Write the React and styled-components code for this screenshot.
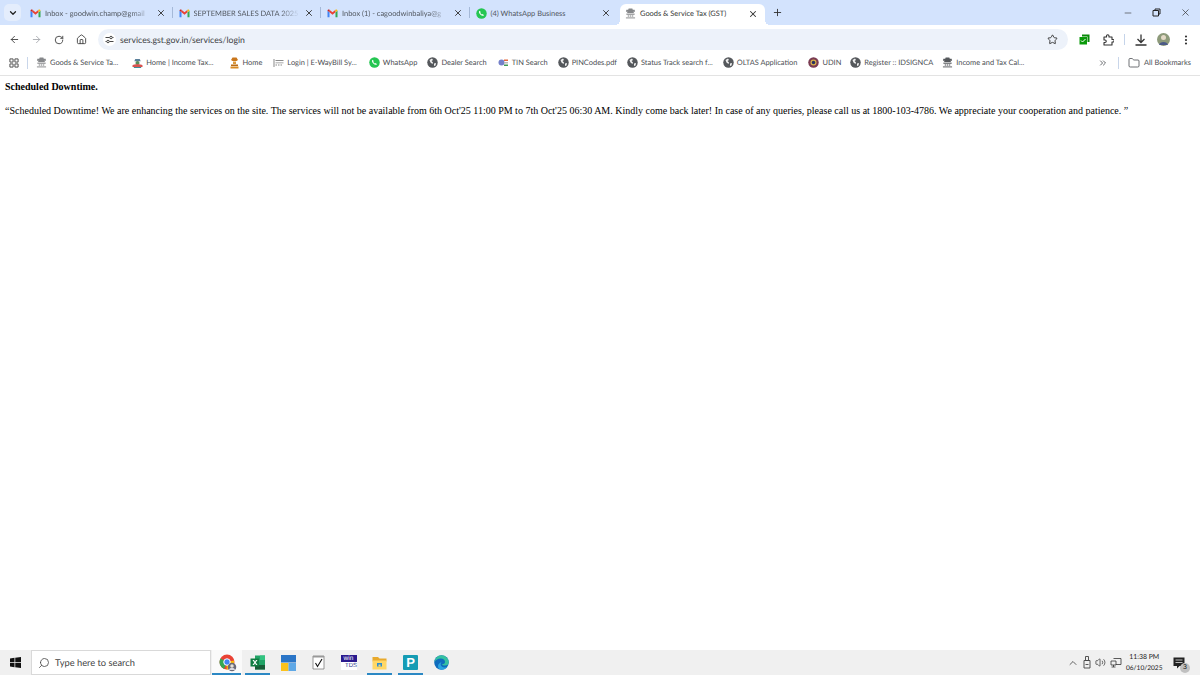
import { createGlobalStyle, css, styled } from "styled-components";
import {
  ArrowLeft,
  ArrowRight,
  ChevronDown,
  ChevronUp,
  ChevronsRight,
  Folder,
  House,
  MoreVertical,
  Plus,
  RotateCw,
  Search,
  Star,
  Volume2,
  X,
  Minus,
} from "lucide-react";

const GlobalStyle = createGlobalStyle`
  html, body { margin: 0; padding: 0; background: #fff; }
  #root { height: 675px; width: 1200px; overflow: hidden; }
`;

const Screen = styled.div`
  display: flex;
  flex-direction: column;
  width: 1200px;
  height: 675px;
  font-family: Lato, Roboto, sans-serif;
  text-rendering: geometricPrecision;
  color: #3c4043;
`;

const TabStrip = styled.div`
  display: flex;
  align-items: center;
  height: 25px;
  background: #d3e3fd;
  flex-shrink: 0;
`;

const TabMenu = styled.button`
  display: flex;
  align-items: center;
  justify-content: center;
  width: 17px;
  height: 17px;
  margin: 0 3px 0 4px;
  padding: 0;
  border: 0;
  border-radius: 5px;
  background: #e4edfc;
  color: #222;
`;

const Tab = styled.div`
  position: relative;
  display: flex;
  align-items: center;
  box-sizing: border-box;
  flex-shrink: 0;
  width: 148.5px;
  height: 25px;
  padding: 1px 5px 0 6px;
  gap: 4px;
  font-size: 7.45px;
  color: #50565e;

  &::after {
    content: "";
    display: ${(p) => (p.$sep ? "block" : "none")};
    position: absolute;
    right: 0;
    top: 7px;
    height: 11px;
    width: 1px;
    background: #a5b9d8;
  }

  ${(p) =>
    p.$active &&
    css`
      width: 145px;
      height: 21px;
      margin: 4px 0 0 2px;
      padding: 0 5px 2px 5px;
      border-radius: 6px 6px 0 0;
      background: #fff;
      color: #333;

      &::before,
      &::after {
        content: "";
        display: block;
        position: absolute;
        top: auto;
        bottom: 0;
        width: 5px;
        height: 5px;
      }

      &::before {
        left: -5px;
        background: radial-gradient(circle at 0 0, transparent 5px, #fff 5px);
      }

      &::after {
        right: -5px;
        background: radial-gradient(circle at 100% 0, transparent 5px, #fff 5px);
      }
    `}
`;

const TabTitle = styled.span`
  flex: 1;
  min-width: 0;
  white-space: nowrap;
  mask-image: ${(p) => (p.$fade ? "linear-gradient(to right, #000 80%, transparent)" : "none")};
`;

const TabClose = styled(X)`
  flex-shrink: 0;
  width: 10px;
  height: 10px;
  margin-right: 2px;
  color: #333;
`;

const NewTab = styled(Plus)`
  width: 11px;
  height: 11px;
  margin-left: 7px;
  color: #333;
`;

const WindowButtons = styled.div`
  display: flex;
  align-items: center;
  gap: 19px;
  margin-left: auto;
  padding-right: 9px;
  color: #333;
`;

const Toolbar = styled.div`
  display: flex;
  align-items: center;
  box-sizing: border-box;
  height: 25px;
  padding: 4px 0 0 8px;
  background: #fff;
  flex-shrink: 0;
`;

const NavButton = styled.div`
  display: flex;
  justify-content: center;
  width: 12px;
  margin-right: ${(p) => p.$gap || 10}px;
  color: ${(p) => (p.$off ? "#a8abb0" : "#444")};
`;

const Omnibox = styled.div`
  display: flex;
  align-items: center;
  flex-shrink: 0;
  width: 970px;
  height: 21px;
  margin-left: 5px;
  padding-left: 5px;
  box-sizing: border-box;
  border-radius: 11px;
  background: #edf2fa;
  font-size: 8.7px;
  color: #3c4043;
`;

const SiteInfo = styled.span`
  display: flex;
  align-items: center;
  justify-content: center;
  width: 13px;
  height: 13px;
  margin-right: 4px;
  border-radius: 50%;
  background: #fff;
  color: #333;
`;

const Address = styled.span`
  flex: 1;
`;

const StarIcon = styled(Star)`
  width: 11px;
  height: 11px;
  margin-right: 10px;
  color: #333;
`;

const ToolIcons = styled.div`
  display: flex;
  align-items: center;
  margin-left: 11px;
  gap: 10px;
  color: #333;
`;

const ToolSep = styled.span`
  width: 1px;
  height: 11px;
  background: #c5d4ea;
`;

const BookmarkBar = styled.div`
  display: flex;
  align-items: center;
  height: 25px;
  padding-left: 9px;
  background: #fff;
  border-bottom: 1px solid #e3e3e3;
  font-size: 7.45px;
  flex-shrink: 0;
`;

const AppsGrid = styled.svg`
  width: 10px;
  height: 10px;
  flex-shrink: 0;
  color: #444;
`;

const BarSep = styled.span`
  flex-shrink: 0;
  width: 1px;
  height: 12px;
  margin: 0 ${(p) => p.$right || 8}px 0 ${(p) => p.$left || 8}px;
  background: #c9d6ea;
`;

const Bookmark = styled.div`
  display: flex;
  align-items: center;
  flex-shrink: 0;
  gap: 3px;
  margin-right: ${(p) => p.$space}px;
  white-space: nowrap;
  color: #4a4d52;
`;

const BookmarkIcon = styled.span`
  display: flex;
  justify-content: center;
  width: 11px;
`;

const BarEnd = styled.div`
  display: flex;
  align-items: center;
  gap: 0;
  margin-left: auto;
  padding-right: 9px;
  white-space: nowrap;
  color: #4a4d52;
`;

const FolderIcon = styled(Folder)`
  width: 12px;
  height: 12px;
  margin-right: 4px;
`;

const Page = styled.main`
  flex: 1;
  padding: 4px 5px 0;
  background: #fff;
  color: #000;
  font-family: "Liberation Serif", "Times New Roman", serif;
  font-size: 10px;
  text-rendering: auto;
`;

const Heading = styled.div`
  font-weight: 700;
  line-height: 13px;
  margin-bottom: 11px;
`;

const Notice = styled.p`
  margin: 0;
  line-height: 13px;
  white-space: nowrap;
`;

const Taskbar = styled.footer`
  display: flex;
  align-items: center;
  height: 25px;
  background: #f0f0f0;
  flex-shrink: 0;
`;

const StartButton = styled.div`
  display: flex;
  justify-content: center;
  width: 31px;
`;

const SearchBox = styled.div`
  display: flex;
  align-items: center;
  box-sizing: border-box;
  width: 180px;
  height: 25px;
  padding-left: 6px;
  gap: 5px;
  background: #fff;
  border: 1px solid #d9d9d9;
  font-size: 9.3px;
  color: #444;
`;

const SearchIcon = styled(Search)`
  width: 12px;
  height: 12px;
  transform: scaleX(-1);
`;

const Apps = styled.div`
  display: flex;
  align-items: center;
  height: 25px;
  margin-left: 1px;
`;

const AppSlot = styled.div`
  position: relative;
  display: flex;
  align-items: center;
  justify-content: center;
  width: ${(p) => p.$w || 30}px;
  height: 25px;
  padding-left: ${(p) => (p.$active ? 2 : 0)}px;
  box-sizing: border-box;
  background: ${(p) => (p.$active ? "#fafafa" : "transparent")};

  &::after {
    content: "";
    display: ${(p) => (p.$line ? "block" : "none")};
    position: absolute;
    left: ${(p) => (p.$active ? 0 : 3)}px;
    right: ${(p) => (p.$active ? 1 : 3)}px;
    bottom: 0;
    height: 2px;
    background: #2b88c4;
  }
`;

const Tray = styled.div`
  display: flex;
  align-items: center;
  margin-left: auto;
  gap: 4px;
  color: #333;
`;

const Clock = styled.div`
  display: flex;
  flex-direction: column;
  align-items: center;
  padding-top: 1px;
  font-size: 6.9px;
  line-height: 11.5px;
  color: #222;
`;

const ClockDate = styled.span`
  font-size: 6.6px;
`;

const NotifyWrap = styled.div`
  position: relative;
  display: flex;
  margin: 0 15px 0 6.500px;
`;

const NotifyBadge = styled.span`
  position: absolute;
  right: -5px;
  bottom: -4px;
  width: 10px;
  height: 10px;
  border-radius: 50%;
  background: #c0c0c0;
  font-size: 7px;
  line-height: 10px;
  text-align: center;
  color: #111;
  font-family: "Liberation Sans", sans-serif;
`;

const WinTdsMark = styled.div`
  display: flex;
  flex-direction: column;
  align-items: center;
  width: 16px;
  height: 15px;
  background: #fff;
  font-family: "Liberation Sans", sans-serif;
  line-height: 7px;
`;

const WinPart = styled.span`
  align-self: stretch;
  background: #2a1a8e;
  color: #fff;
  font-size: 6.5px;
  text-align: center;
`;

const TdsPart = styled.span`
  font-size: 6px;
  color: #2a3a8e;
  padding-left: 5px;
  padding-top: 1px;
`;

const PMark = styled.div`
  display: flex;
  align-items: center;
  justify-content: center;
  width: 15px;
  height: 15px;
  border-radius: 1px;
  background: #159cb4;
  color: #fff;
  font-family: "Liberation Sans", sans-serif;
  font-weight: 700;
  font-size: 13px;
`;

function Gmail() {
  return (
    <svg width="11" height="9" viewBox="0 0 22 17">
      <path d="M1 16V3l4 3v10z" fill="#4285f4" />
      <path d="M21 16V3l-4 3v10z" fill="#34a853" />
      <path d="M5 6V1l6 5 6-5v5l-6 5z" fill="#ea4335" />
      <path d="M1 3c0-2 2.600-3 4-2v5z" fill="#c5221f" />
      <path d="M21 3c0-2-2.600-3-4-2v5z" fill="#fbbc04" />
    </svg>
  );
}

function WhatsApp() {
  return (
    <svg width="11" height="11" viewBox="0 0 22 22">
      <circle cx="11" cy="11" r="10.500" fill="#25c652" />
      <path d="M7 5.500c-2 2-1 5 1.500 7.500s5.500 3.500 7.500 1.500l-2.500-2.500-1.500 1c-1.500-.5-3-2-3.500-3.500l1-1.500z" fill="#fff" />
    </svg>
  );
}

// lion capital, drawn small: it is only a grey smudge at this size
function Emblem({ color = "#85878a" }) {
  return (
    <svg width="11" height="11" viewBox="0 0 24 24">
      <path d="M8 1h8l1 3h4l1 4h-4l2 3H4l2-3H2l1-4h4z" fill={color} />
      <path d="M3 12h18v3H3zM6 16h3v3H6zM10.500 16h3v3h-3zM15 16h3v3h-3zM2 20h20v3H2z" fill={color} opacity="0.75" />
    </svg>
  );
}

function Globe() {
  return (
    <svg width="11" height="11" viewBox="0 0 22 22">
      <circle cx="11" cy="11" r="10.500" fill="#55585c" />
      <path d="M5 6l5-3 2 3-3 2 3 3-1 3-4-3zM14 13l4-1-1 5-3 1z" fill="#f1f1f1" />
    </svg>
  );
}

function IncomeTax() {
  return (
    <svg width="11" height="10" viewBox="0 0 24 22">
      <path d="M7 2h10l2 5H5z" fill="#5a7f9a" />
      <circle cx="12" cy="11" r="4.500" fill="#5a8c5a" />
      <path d="M1 16c4-3 18-3 22 0v4H1z" fill="#d9534f" />
      <path d="M4 20h16v2H4z" fill="#2a7f8f" />
    </svg>
  );
}

function Ashoka() {
  return (
    <svg width="9" height="12" viewBox="0 0 18 24">
      <path d="M5 1h8l3 5-3 2H5L2 6z" fill="#c9761c" />
      <path d="M6 9h6v5H6z" fill="#dc9a3c" />
      <path d="M2 15h14v3H2z" fill="#b96a14" />
      <path d="M1 19h16v4H1z" fill="#d88a24" />
    </svg>
  );
}

function Eway() {
  return (
    <svg width="11" height="11" viewBox="0 0 22 22">
      <path d="M1 4h2v16H1zM5 6h16v2H5zM5 11h16v1.500H5zM5 15h3v2H5zM10 15h3v2h-3zM15 15h3v2h-3z" fill="#8a8a8a" />
    </svg>
  );
}

function Tin() {
  return (
    <svg width="11" height="11" viewBox="0 0 22 22">
      <circle cx="7" cy="11" r="6" fill="#7480c9" />
      <path d="M12 5h8v3h-8z" fill="#e2683c" />
      <path d="M12 10h8v3h-8z" fill="#b7b7b7" />
      <path d="M12 15h8v3h-8z" fill="#3d9a55" />
    </svg>
  );
}

function Udin() {
  return (
    <svg width="11" height="11" viewBox="0 0 22 22">
      <circle cx="11" cy="11" r="10.500" fill="#7a3b52" />
      <circle cx="11" cy="11" r="6" fill="#d8b04a" />
      <circle cx="11" cy="11" r="3.500" fill="#27315f" />
    </svg>
  );
}

const bookmarks = [
  { label: "Goods & Service Ta...", icon: <Emblem />, space: 14 },
  { label: "Home | Income Tax...", icon: <IncomeTax />, space: 15 },
  { label: "Home", icon: <Ashoka />, space: 11 },
  { label: "Login | E-WayBill Sy...", icon: <Eway />, space: 12 },
  { label: "WhatsApp", icon: <WhatsApp />, space: 10 },
  { label: "Dealer Search", icon: <Globe />, space: 11 },
  { label: "TIN Search", icon: <Tin />, space: 10 },
  { label: "PINCodes.pdf", icon: <Globe />, space: 10 },
  { label: "Status Track search f...", icon: <Globe />, space: 10 },
  { label: "OLTAS Application", icon: <Globe />, space: 11 },
  { label: "UDIN", icon: <Udin />, space: 9 },
  { label: "Register :: IDSIGNCA", icon: <Globe />, space: 9 },
  { label: "Income and Tax Cal...", icon: <Emblem color="#55585c" />, space: 11 },
];

const tabs = [
  { title: "Inbox - goodwin.champ@gmail", icon: <Gmail />, fade: true, sep: true },
  { title: "SEPTEMBER SALES DATA 2025 -", icon: <Gmail />, fade: true, sep: true },
  { title: "Inbox (1) - cagoodwinbaliya@g", icon: <Gmail />, fade: true, sep: true },
  { title: "(4) WhatsApp Business", icon: <WhatsApp /> },
];

function WindowsLogo() {
  return (
    <svg width="11" height="11" viewBox="0 0 22 22">
      <path d="M0 3l9-1.300V10H0zM10.500 1.500L22 0v10H10.500zM0 11.500h9v8.800L0 19zM10.500 11.500H22V22l-11.500-1.600z" fill="#111" />
    </svg>
  );
}

function ChromeBadge() {
  return (
    <svg width="18" height="18" viewBox="0 0 36 36">
      <circle cx="16" cy="16" r="15" fill="#e94235" />
      <path d="M16 16L3 9a15 15 0 0 0 7 21z" fill="#34a853" />
      <path d="M16 16l14-3a15 15 0 0 1-15 18z" fill="#fbbc04" />
      <circle cx="16" cy="16" r="6.500" fill="#4285f4" stroke="#fff" strokeWidth="2" />
      <circle cx="26" cy="26" r="8.500" fill="#6a6a78" />
      <circle cx="26" cy="24" r="3.500" fill="#e5e0d6" />
      <path d="M20 32c1-6 11-6 12 0z" fill="#d8d8e0" />
    </svg>
  );
}

function Excel() {
  return (
    <svg width="16" height="15" viewBox="0 0 32 30">
      <path d="M10 1h20v28H10z" fill="#21a366" />
      <path d="M20 1h10v9H20z" fill="#33c481" />
      <path d="M10 20h20v9H10z" fill="#185c37" />
      <path d="M1 7h17v16H1z" fill="#107c41" />
      <path d="M5 10h3l2 3.500L12 10h3l-3.500 5 3.500 5h-3l-2-3.500L8 20H5l3.500-5z" fill="#fff" />
    </svg>
  );
}

function Blocks() {
  return (
    <svg width="15" height="16" viewBox="0 0 30 32">
      <path d="M0 0h30v15H0z" fill="#2a75c7" />
      <path d="M0 16h15v16H0z" fill="#fcc21c" />
      <path d="M15 16h15v16H15z" fill="#5fa8e6" />
    </svg>
  );
}

function Checklist() {
  return (
    <svg width="13" height="15" viewBox="0 0 26 30">
      <path d="M2 2h22v26H2z" fill="#fff" stroke="#777" strokeWidth="1.500" />
      <path d="M2 2h22v3H2z" fill="#999" />
      <path d="M7 16l4 7 9-15" fill="none" stroke="#111" strokeWidth="2.200" />
    </svg>
  );
}

function Explorer() {
  return (
    <svg width="15" height="14" viewBox="0 0 30 28">
      <path d="M1 2h11l3 3h14v6H1z" fill="#e8a92c" />
      <path d="M1 9h28v18H1z" fill="#ffd766" />
      <path d="M10 14h10v7H10z" fill="#2f8fd0" />
      <path d="M13 17h4v4h-4z" fill="#ffd766" />
    </svg>
  );
}

function Edge() {
  return (
    <svg width="15" height="15" viewBox="0 0 30 30">
      <circle cx="15" cy="15" r="14.500" fill="#0f6cbd" />
      <path d="M1 14C2 6 8 .5 15 .5 23 .5 29.500 7 29.500 15c0 3.500-3 6-7.500 6-3 0-5.500-1-6-2.500 3.500 0 6-1.500 6-4.500 0-4-3.500-7-8.500-7C8 7 3.500 10 1 14z" fill="#35c1a0" />
      <path d="M15 29.500c5 0 9-2 12-6-4 2-8 2-11 0-3-2-4-6-1-9-4 1-7 4-7 8 0 4 3 7 7 7z" fill="#2aa3e0" />
    </svg>
  );
}

function Network() {
  return (
    <svg width="12" height="11" viewBox="0 0 24 22" fill="none" stroke="#333" strokeWidth="1.600">
      <path d="M7 3h15v12H12M2 8h10v8H2zM7 16v4M3 20h8" />
    </svg>
  );
}

function UsbDrive() {
  return (
    <svg width="8" height="13" viewBox="0 0 16 26" fill="none" stroke="#444" strokeWidth="1.800">
      <path d="M5 1h6v8H5zM2 9h12v15H2zM5 17h6" />
    </svg>
  );
}

function Notify() {
  return (
    <svg width="12" height="12" viewBox="0 0 24 24">
      <path d="M1 1h22v17H13l-5 5v-5H1z" fill="#222" />
      <path d="M5 6h14M5 11h14" stroke="#f0f0f0" strokeWidth="1.500" />
    </svg>
  );
}

function SyncBadge() {
  return (
    <svg width="11" height="11" viewBox="0 0 22 22">
      <path d="M6 1h15v15h-4V5H6z" fill="#0a8a0a" />
      <path d="M1 6h15v15H1z" fill="#0a9a0a" />
      <path d="M4 13l3 3 6-6" fill="none" stroke="#fff" strokeWidth="2" />
    </svg>
  );
}

const ExtensionSvg = styled.svg`
  width: 12px;
  height: 12px;
  margin-left: 2px;
`;

function ExtensionIcon() {
  return (
    <ExtensionSvg viewBox="0 0 24 24" fill="none" stroke="#333" strokeWidth="2.200" strokeLinejoin="round">
      <path d="M4 6h5V4a2.500 2.500 0 0 1 5 0v2h6v5h2a2.500 2.500 0 0 1 0 5h-2v6H4v-5h2a2.500 2.500 0 0 0 0-5H4z" />
    </ExtensionSvg>
  );
}

function DownloadIcon() {
  return (
    <svg width="12" height="12" viewBox="0 0 24 24" fill="none" stroke="#333" strokeWidth="2.600">
      <path d="M12 1v15M5 10l7 7 7-7M1 22h22" />
    </svg>
  );
}

function Avatar() {
  return (
    <svg width="13" height="13" viewBox="0 0 26 26">
      <circle cx="13" cy="13" r="13" fill="#8d9a7a" />
      <circle cx="13" cy="9" r="5" fill="#e3d9c6" />
      <path d="M4 24c1-8 17-8 18 0z" fill="#4b5a86" />
    </svg>
  );
}

function TuneIcon() {
  return (
    <svg width="9" height="9" viewBox="0 0 18 18" fill="none" stroke="#333" strokeWidth="1.800">
      <path d="M1 5h8M15 5h2M1 13h2M9 13h8" />
      <circle cx="12" cy="5" r="2.500" />
      <circle cx="6" cy="13" r="2.500" />
    </svg>
  );
}

export default function App() {
  return (
    <Screen>
      <GlobalStyle />
      <TabStrip>
        <TabMenu>
          <ChevronDown size={10} strokeWidth={3} />
        </TabMenu>
        {tabs.map((t) => (
          <Tab key={t.title} $sep={t.sep}>
            {t.icon}
            <TabTitle $fade={t.fade}>{t.title}</TabTitle>
            <TabClose strokeWidth={2.2} />
          </Tab>
        ))}
        <Tab $active>
          <Emblem />
          <TabTitle>Goods &amp; Service Tax (GST)</TabTitle>
          <TabClose strokeWidth={2.5} />
        </Tab>
        <NewTab strokeWidth={2} />
        <WindowButtons>
          <Minus size={10} strokeWidth={1.5} />
          <svg width="9" height="9" viewBox="0 0 18 18" fill="none" stroke="#222" strokeWidth="2">
            <path d="M2 5h11v11H2zM6 5V2h10v10h-3" />
          </svg>
          <X size={11} strokeWidth={1.5} />
        </WindowButtons>
      </TabStrip>

      <Toolbar>
        <NavButton>
          <ArrowLeft size={11} strokeWidth={2} />
        </NavButton>
        <NavButton $off $gap={11}>
          <ArrowRight size={11} strokeWidth={2} />
        </NavButton>
        <NavButton>
          <RotateCw size={10} strokeWidth={2.2} />
        </NavButton>
        <NavButton $gap={6}>
          <House size={11} strokeWidth={2} />
        </NavButton>
        <Omnibox>
          <SiteInfo>
            <TuneIcon />
          </SiteInfo>
          <Address>services.gst.gov.in/services/login</Address>
          <StarIcon strokeWidth={2} />
        </Omnibox>
        <ToolIcons>
          <SyncBadge />
          <ExtensionIcon />
          <ToolSep />
          <DownloadIcon />
          <Avatar />
          <MoreVertical size={12} strokeWidth={2.4} />
        </ToolIcons>
      </Toolbar>

      <BookmarkBar>
        <AppsGrid viewBox="0 0 22 22" fill="none" stroke="currentColor" strokeWidth="2">
          <path d="M2 2h7v7H2zM13 2h7v7h-7zM2 13h7v7H2zM13 13h7v7h-7z" />
        </AppsGrid>
        <BarSep />
        {bookmarks.map((b) => (
          <Bookmark key={b.label} $space={b.space}>
            <BookmarkIcon>{b.icon}</BookmarkIcon>
            {b.label}
          </Bookmark>
        ))}
        <BarEnd>
          <ChevronsRight size={10} strokeWidth={2} />
          <BarSep $left={10} $right={9} />
          <FolderIcon strokeWidth={1.6} />
          All Bookmarks
        </BarEnd>
      </BookmarkBar>

      <Page>
        <Heading>Scheduled Downtime.</Heading>
        <Notice>
          “Scheduled Downtime! We are enhancing the services on the site. The services will not be available from 6th Oct'25 11:00 PM to 7th Oct'25 06:30 AM. Kindly come back later! In case of any queries, please call us at 1800-103-4786. We appreciate your cooperation and patience. ”
        </Notice>
      </Page>

      <Taskbar>
        <StartButton>
          <WindowsLogo />
        </StartButton>
        <SearchBox>
          <SearchIcon strokeWidth={1.6} />
          Type here to search
        </SearchBox>
        <Apps>
          <AppSlot $active $line><ChromeBadge /></AppSlot>
          <AppSlot $w={31} $line><Excel /></AppSlot>
          <AppSlot><Blocks /></AppSlot>
          <AppSlot><Checklist /></AppSlot>
          <AppSlot $w={31}>
            <WinTdsMark>
              <WinPart>win</WinPart>
              <TdsPart>TDS</TdsPart>
            </WinTdsMark>
          </AppSlot>
          <AppSlot $w={31} $line><Explorer /></AppSlot>
          <AppSlot $w={31} $line><PMark>P</PMark></AppSlot>
          <AppSlot $w={31}><Edge /></AppSlot>
        </Apps>
        <Tray>
          <ChevronUp size={12} strokeWidth={1.5} />
          <UsbDrive />
          <Volume2 size={11} strokeWidth={1.6} />
          <Network />
          <Clock>
            <span>11:38 PM</span>
            <ClockDate>06/10/2025</ClockDate>
          </Clock>
          <NotifyWrap>
            <Notify />
            <NotifyBadge>3</NotifyBadge>
          </NotifyWrap>
        </Tray>
      </Taskbar>
    </Screen>
  );
}
